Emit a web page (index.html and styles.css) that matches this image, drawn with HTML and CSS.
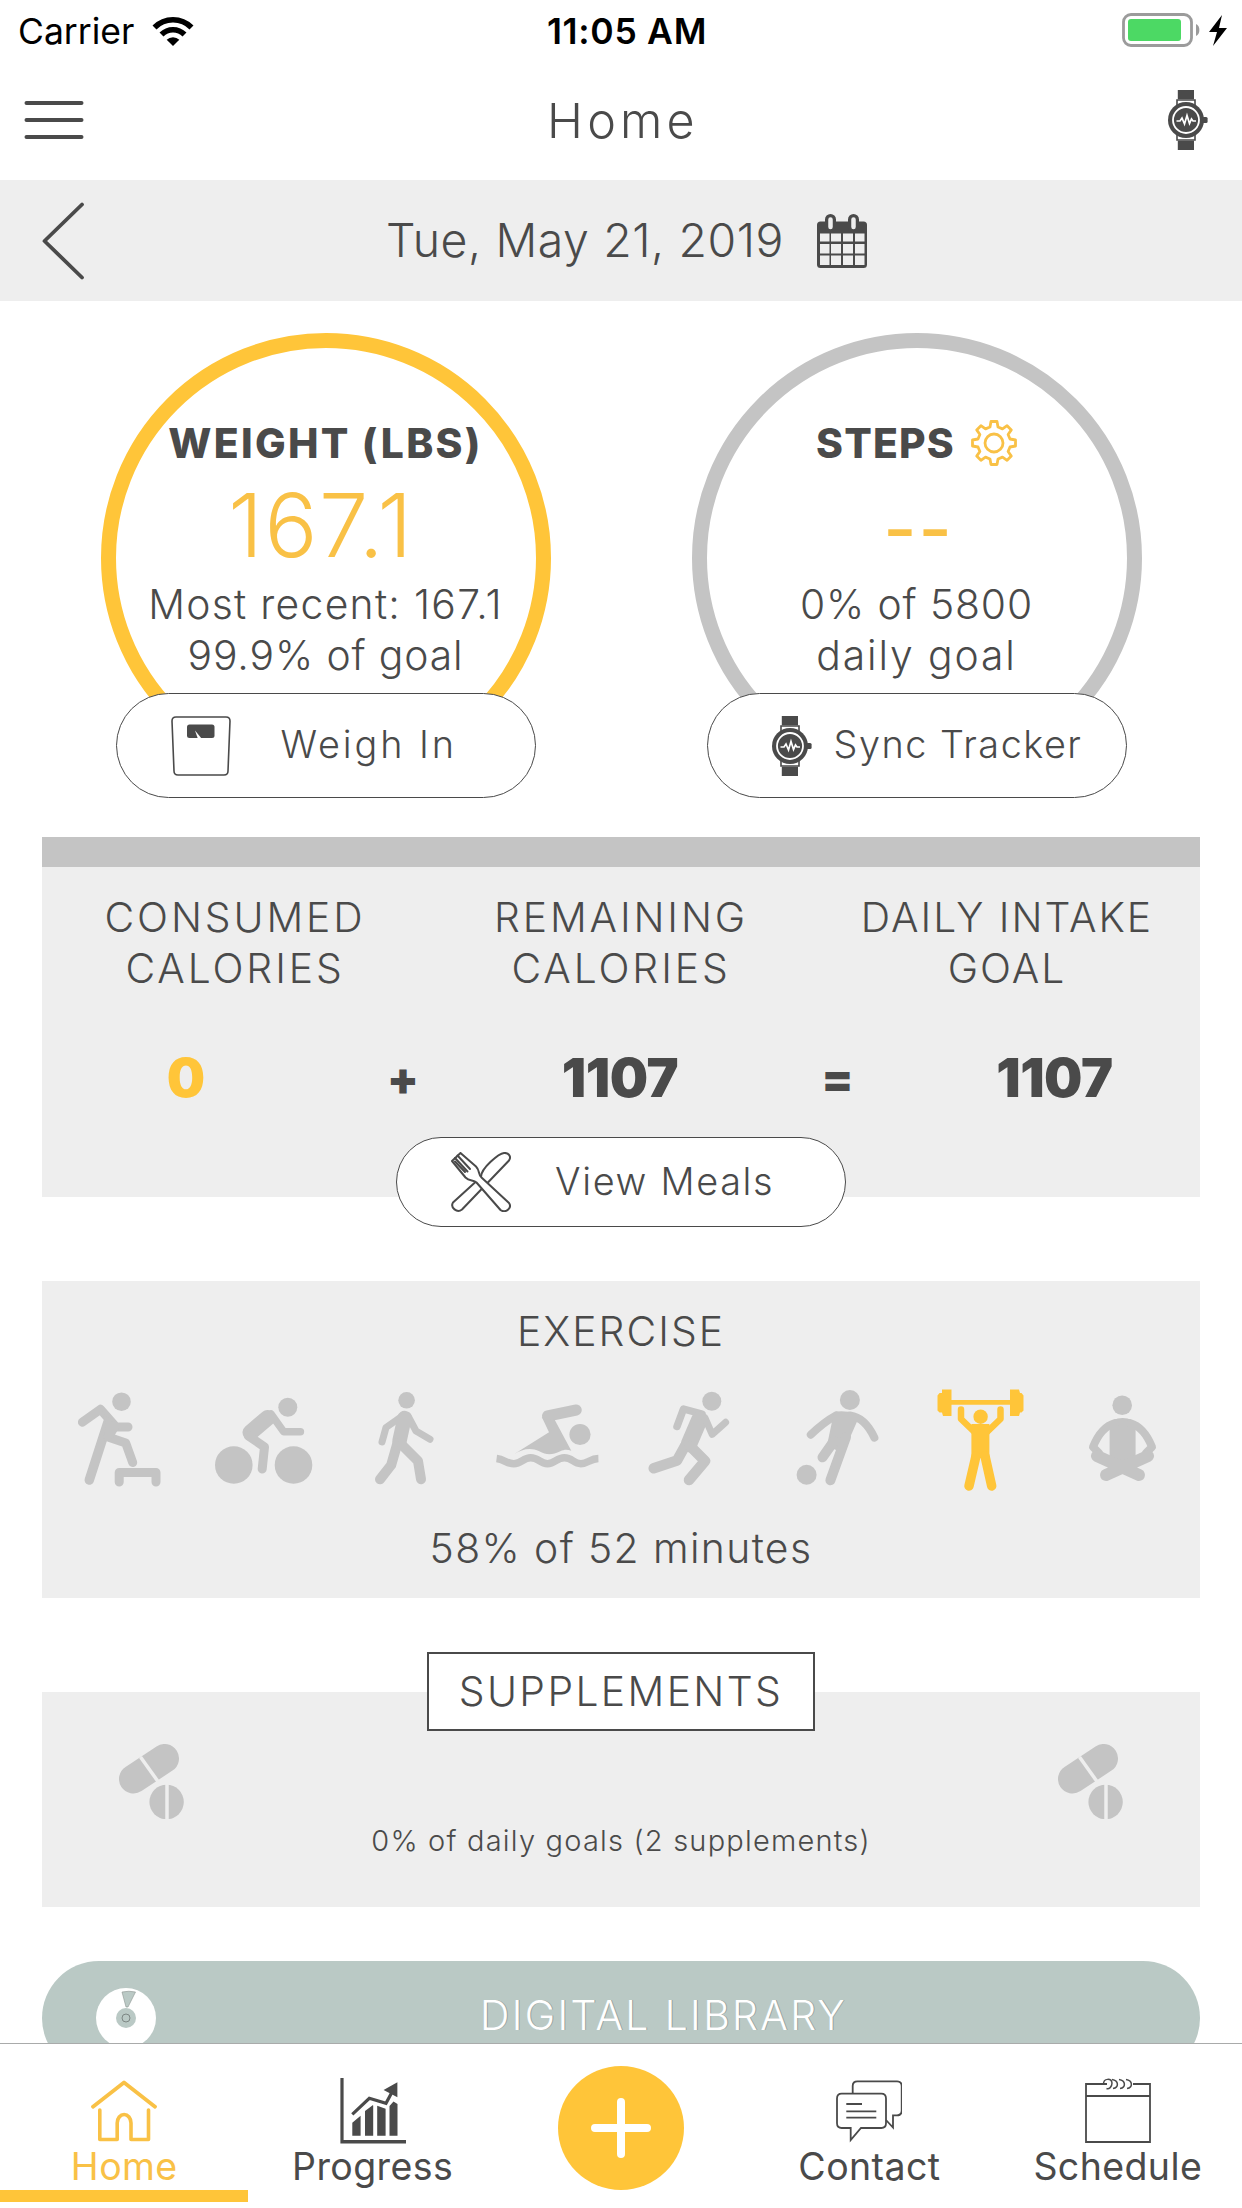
FILE: index.html
```html
<!DOCTYPE html>
<html lang="en">
<head>
    <meta charset="UTF-8">
    <meta name="viewport" content="width=device-width, initial-scale=1.0">
    <title>Home</title>
    <link rel="stylesheet" href="styles.css">
</head>
<body>
    <!-- shared symbols -->
    <svg class="symbols">
        <symbol id="watch" viewBox="0 0 40 60">
            <path d="M9.8 0h16.2v9.3H9.8zM9.8 50.7h16.2V60H9.8z"/>
            <path d="M9 18V10h18v8M9 42v8h18v-8" fill="none" stroke="#4a4a4a" stroke-width="1.6"/>
            <circle cx="18" cy="30" r="18"/>
            <rect x="34" y="27" width="5.6" height="6" rx="1.5"/>
            <circle cx="18" cy="30" r="13" fill="none" stroke="#fff" stroke-width="1.8"/>
            <path d="M8.5 31H12l2-3 2.5 6 2.5-8.5 2.5 8 2-4.5 1.5 2h3" fill="none" stroke="#fff" stroke-width="1.7"/>
        </symbol>
        <symbol id="pills" viewBox="0 0 65 75">
            <path d="M45.5 14.5L14.5 35" stroke="#c4c4c4" stroke-width="29" stroke-linecap="round"/>
            <path d="M21.5 13L39 37.5" stroke="#eee" stroke-width="3.5"/>
            <circle cx="47.6" cy="58" r="18.3" fill="#eee"/>
            <circle cx="47.6" cy="58" r="17.2" fill="#c4c4c4"/>
            <path d="M48 40v36" stroke="#eee" stroke-width="3.5"/>
        </symbol>
    </svg>

    <div class="status-bar">
        <div class="network">
            <span>Carrier</span>
            <svg viewBox="0 0 42 30" width="42" height="30">
                <path d="M2.500 11.500a26 26 0 0 1 37 0M9.500 18.500a16.300 16.300 0 0 1 23 0" fill="none" stroke="#000" stroke-width="5.600"/>
                <path d="M21 30l-6.300-6.300a9 9 0 0 1 12.600 0z"/>
            </svg>
        </div>
        <span class="time">11:05 AM</span>
        <svg class="battery" viewBox="0 0 106 34" width="106" height="34">
            <rect x="1.5" y="1.5" width="68" height="31" rx="7.5" fill="none" stroke="#9b9b9b" stroke-width="2.8"/>
            <rect x="6" y="6" width="53" height="22" rx="3" fill="#4cd964"/>
            <path d="M74 11c4.500 1.500 4.500 10.500 0 12z" fill="#9b9b9b"/>
            <path d="M100 2L87 19h8l-4 14 14-18h-8z"/>
        </svg>
    </div>

    <div class="nav-bar">
        <svg viewBox="0 0 60 40" width="60" height="40">
            <path d="M2.500 3h55M2.500 20h55M2.500 37h55" stroke="#4a4a4a" stroke-width="4" stroke-linecap="round"/>
        </svg>
        <h1 class="title">Home</h1>
        <svg width="40" height="60" fill="#4a4a4a"><use href="#watch"/></svg>
    </div>

    <div class="date-bar">
        <svg viewBox="0 0 43 78" width="43" height="78">
            <path d="M40 2.500L2.500 39 40 75.500" fill="none" stroke="#4a4a4a" stroke-width="3.800" stroke-linecap="round" stroke-linejoin="round"/>
        </svg>
        <div class="date">
            <span>Tue, May 21, 2019</span>
            <svg viewBox="0 0 50 54" width="50" height="54">
                <rect x="0" y="7.5" width="50" height="46.5" rx="3.5" fill="#4a4a4a"/>
                <path d="M13.500 14V5.500M36.500 14V5.500" stroke="#4a4a4a" stroke-width="11" stroke-linecap="round"/>
                <path d="M13.500 13V5.500M36.500 13V5.500" stroke="#eee" stroke-width="4.500" stroke-linecap="round"/>
                <path d="M3 19.500h9.500v8H3zM14 19.500h10v8H14zM26 19.500h10v8H26zM38 19.500h9.500v8H38zM3 30h9.500v9.500H3zM14 30h10v9.500H14zM26 30h10v9.500H26zM38 30h9.500v9.500H38zM3 41.500h9.500V51H3zM14 41.500h10V51H14zM26 41.500h10V51H26zM38 41.500h9.500V51H38z" fill="#eee"/>
            </svg>
        </div>
    </div>

    <div class="dials">
        <div class="dial-column">
            <div class="dial dial-active">
                <h2 class="dial-title weight-title">WEIGHT (LBS)</h2>
                <div class="dial-value">167.1</div>
                <div class="dial-text recent">Most recent: 167.1</div>
                <div class="dial-text">99.9% of goal</div>
            </div>
            <div class="button weigh-in">
                <svg viewBox="0 0 60 60" width="60" height="60">
                    <path d="M5 1h50q4 0 4 4l-2 50q0 4-4 4H7q-4 0-4-4L1 5q0-4 4-4z" fill="none" stroke="#4a4a4a" stroke-width="1.6"/>
                    <rect x="16" y="8.5" width="27.5" height="13.5" rx="2.5" fill="#4a4a4a"/>
                    <path d="M24 14.500l6.500 8-3.500.5z" fill="#fff"/>
                </svg>
                <span>Weigh In</span>
            </div>
        </div>
        <div class="dial-column">
            <div class="dial">
                <h2 class="dial-title">STEPS
                    <svg viewBox="-23 -23 46 46" width="46" height="46" fill="none" stroke="#f9c146" stroke-width="2.8" stroke-linejoin="round">
                        <path d="M-4-16L-3-21.500 3-21.500 4-16 8.500-14.100 13.100-17.300 17.300-13.100 14.100-8.500 16-4 21.500-3 21.500 3 16 4 14.100 8.500 17.300 13.100 13.100 17.300 8.500 14.100 4 16 3 21.500-3 21.500-4 16-8.500 14.100-13.100 17.300-17.300 13.100-14.100 8.500-16 4-21.500 3-21.500-3-16-4-14.100-8.500-17.300-13.100-13.100-17.300-8.500-14.100z"/>
                        <circle r="9"/>
                    </svg>
                </h2>
                <div class="dial-value dashes">--</div>
                <div class="dial-text steps-goal">0% of 5800</div>
                <div class="dial-text daily-goal">daily goal</div>
            </div>
            <div class="button sync">
                <svg width="40" height="60" fill="#4a4a4a"><use href="#watch"/></svg>
                <span>Sync Tracker</span>
            </div>
        </div>
    </div>

    <div class="card calories">
        <div class="labels">
            <div>CONSUMED<br>CALORIES</div>
            <div>REMAINING<br>CALORIES</div>
            <div class="intake">DAILY INTAKE<br>GOAL</div>
        </div>
        <div class="values">
            <span class="consumed">0</span>
            <span class="sign">+</span>
            <span>1107</span>
            <span class="sign">=</span>
            <span>1107</span>
        </div>
    </div>
    <div class="button meals">
        <svg viewBox="0 0 60 60" width="60" height="60" fill="#fff" stroke="#4a4a4a" stroke-width="2" stroke-linejoin="round" stroke-linecap="round">
            <path d="M30 25C30 16 48 1.500 53 1c5-.5 7.500 4 5 7.500L11 57.500c-5 4-12-2-9-7z"/>
            <path d="M1 9L9.500 1 25 14.500c4 4 2 8 5.500 11L58 51c3.500 5-3.500 10.500-8.500 7L25.500 30.500c-3-3-7-1-11-5z"/>
            <path d="M4 6l12.500 13.500M6.500 3.500L19 17M4 9.500L14 20" fill="none"/>
        </svg>
        <span>View Meals</span>
    </div>

    <div class="card exercise">
        <h2 class="card-title">EXERCISE</h2>
        <div class="activities">
            <svg viewBox="0 0 144 120">
                <circle cx="79.5" cy="21.7" r="9.3"/>
                <path d="M40.400 42.200L58.400 29.300 74 47H86" fill="none" stroke-width="9"/>
                <path d="M47.300 100L66 42" stroke-width="9.500"/>
                <path d="M66 57l17.700 6 7 19.500" fill="none" stroke-width="9"/>
                <path d="M58.500 30L77 48l-6 10-9 4 2-22z" stroke="none"/>
                <path d="M77.200 102V92.500H114V102" fill="none" stroke-width="9"/>
            </svg>
            <svg viewBox="0 0 144 120">
                <circle cx="46.8" cy="85" r="18.8"/>
                <circle cx="106.5" cy="85" r="18.8"/>
                <circle cx="100.8" cy="27.3" r="9.5"/>
                <path d="M84 34l12.600 17.700h16.800" fill="none" stroke-width="7.500"/>
                <path d="M80.500 38L63.500 52.500" stroke-width="16"/>
                <path d="M61.500 56L77.500 67l-2.300 22" fill="none" stroke-width="9"/>
            </svg>
            <svg viewBox="0 0 144 120">
                <circle cx="74.6" cy="20.3" r="8.3"/>
                <path d="M71 35.500L54 47.500l-4 14.500" fill="none" stroke-width="7"/>
                <path d="M76 36l8 15 14 8.300" fill="none" stroke-width="7"/>
                <path d="M72.500 38l-5 23" stroke-width="14.500"/>
                <path d="M65.500 63l-6.300 22L48 99.300" fill="none" stroke-width="10"/>
                <path d="M70 65l16 16 3 18.300" fill="none" stroke-width="10"/>
            </svg>
            <svg viewBox="0 0 144 120">
                <circle cx="104" cy="54.5" r="10.6"/>
                <path d="M100.300 30L71.500 36" stroke-width="11"/>
                <path d="M65.800 37L78.800 40 95.300 70.700c-4-1.500-7-1.500-11 .5-8 4-14 4-21 0-9-4-17-2-25.400 3.100L73 52.300z" stroke="none"/>
                <path d="M20.600 78.500c8 1 10 5.200 17.300 5.200 8 0 9-6 16.800-6 8 0 9 6 16.800 6s9-6 16.900-6 9 6 16.400 6 9-5 17.600-5.200" fill="none" stroke-width="7.500" stroke-linecap="butt"/>
            </svg>
            <svg viewBox="0 0 144 120">
                <circle cx="90.8" cy="21.3" r="9.5"/>
                <path d="M56 46.500l6.500-17.500L81 34" fill="none" stroke-width="7.500"/>
                <path d="M78.500 39.500L68 64" stroke-width="16.500"/>
                <path d="M84 38l7.200 16.300 13.400-12" fill="none" stroke-width="7"/>
                <path d="M64 66l-8 14.500-23.300 7.800" fill="none" stroke-width="10.500"/>
                <path d="M69 66l15 15-16 19" fill="none" stroke-width="10.500"/>
            </svg>
            <svg viewBox="0 0 144 120">
                <circle cx="83.9" cy="20" r="10"/>
                <path d="M70 35.500Q58 42 44.800 54.700M84 35.500q15 2 24.400 22.200" fill="none" stroke-width="8"/>
                <path d="M68 32q10-2 21 1.500l2 8-14 32-16-8z" stroke="none"/>
                <path d="M68 61l-11.500 16.300" stroke-width="10"/>
                <path d="M80 57l-15.600 43.300" stroke-width="10"/>
                <circle cx="40.6" cy="94.7" r="10"/>
            </svg>
            <svg class="current" viewBox="0 0 144 120">
                <path d="M40 20h60v4.700H40z" stroke="none"/>
                <path d="M31 9.500h9.500v26.500H32l-1-3.500h-2.500l-2-2v-15l2-2.500H31zM99 9.500h9l1 3.500h1.500l2 2.500v15l-2 2h-1.500l-1 3.500h-9z" stroke="none"/>
                <circle cx="69.6" cy="36.7" r="7.2"/>
                <path d="M50 29.500v9.500l14.500 14M89.500 29.500v9.500L75 53" fill="none" stroke-width="6.500"/>
                <path d="M60.400 44h18v34h-18z" stroke="none"/>
                <path d="M65 76l-7 30M74 76l6.700 30" stroke-width="9.500"/>
            </svg>
            <svg viewBox="0 0 144 120">
                <circle cx="67.2" cy="25.3" r="9.8"/>
                <path d="M54.600 46q2-8 13-8t13 8v42h-26z" stroke="none"/>
                <path d="M60 43Q46 47 38 67l6 6M75 43q14 4 22 24l-6 6" fill="none" stroke-width="8"/>
                <path d="M42 76l42 19M93 76L51 95" stroke-width="12"/>
            </svg>
        </div>
        <div class="minutes">58% of 52 minutes</div>
    </div>

    <div class="card supplements">
        <h2 class="boxed-title">SUPPLEMENTS</h2>
        <div class="pills">
            <svg width="65" height="75"><use href="#pills"/></svg>
            <svg width="65" height="75"><use href="#pills"/></svg>
        </div>
        <div class="supplements-goal">0% of daily goals (2 supplements)</div>
    </div>

    <div class="library">
        <svg viewBox="0 0 60 60" width="60" height="60">
            <circle cx="30" cy="30" r="30" fill="#fff"/>
            <path d="M26 4q7-1.500 13.500 0L32 19h-2z" fill="#bac9c5" stroke="#8b9491" stroke-width=".6"/>
            <circle cx="30" cy="30" r="10" fill="#bac9c5"/>
            <circle cx="30" cy="30" r="4" fill="none" stroke="#7d8784" stroke-width="1"/>
        </svg>
        <span>DIGITAL LIBRARY</span>
    </div>

    <div class="tab-bar">
        <div class="tab selected">
            <svg viewBox="0 0 66 66" width="66" height="66" fill="none" stroke="#f9c146" stroke-linecap="round" stroke-linejoin="round">
                <path d="M2 28.700l31-24.200 31 24.200" stroke-width="3.800"/>
                <path d="M8.800 32v29.500h17.400V45a6.900 8.500 0 0 1 13.800 0v16.500h17.500V32" stroke-width="3.600"/>
            </svg>
            <span>Home</span>
        </div>
        <div class="tab">
            <svg viewBox="0 0 66 66" width="66" height="66" fill="#4a4a4a">
                <path d="M.4 0h3.200v62H66v3.600H.4z"/>
                <path d="M12.300 44.700l8.300-7v20h-8.300zM25 33l8-6 .2.700v30H25zM37.200 27.700l8.400 3v27h-8.400zM49.500 28l4-4.500 4 2.500v31.700h-8z"/>
                <path d="M12.300 36.300l17-16L46 25.300l7-13" fill="none" stroke="#4a4a4a" stroke-width="3.200"/>
                <path d="M57.400 4.300v15L43.600 12z"/>
            </svg>
            <span>Progress</span>
        </div>
        <div class="tab">
            <div class="add">
                <svg viewBox="0 0 60 60" width="60" height="60">
                    <path d="M30 4v52M4 30h52" stroke="#fff" stroke-width="8" stroke-linecap="round"/>
                </svg>
            </div>
        </div>
        <div class="tab">
            <svg viewBox="0 0 66 66" width="66" height="66" fill="none" stroke="#4a4a4a" stroke-width="1.8">
                <path d="M16.700 15.700V8q0-4.700 4.700-4.700H61q4.700 0 4.700 4.700v24.600q0 4.700-4.700 4.700h-4v12.200L50 42"/>
                <path d="M5.700 15.700h39.600q4.700 0 4.700 4.700v24.900q0 4.700-4.700 4.700H25L14.700 62V50h-9Q1 50 1 45.300V20.400q0-4.700 4.700-4.700zM10.300 26H26M10.300 33.300h30M10.300 39.700h30"/>
            </svg>
            <span>Contact</span>
        </div>
        <div class="tab">
            <svg viewBox="0 0 66 66" width="66" height="66" fill="none" stroke="#4a4a4a" stroke-width="1.8">
                <path d="M22 6H1v58h64V6H48M1 18h64"/>
                <path d="M18.500 6c0-6 8-6 8.500-1 0 4-3 6.500-5.500 5.500M27 1.500c7 1 7 8 1 9M34 1.500c7 1 7 8 1 9M41 1.500c7 1 7 8 1 9" stroke-width="1.5"/>
            </svg>
            <span>Schedule</span>
        </div>
    </div>
</body>
</html>
```
FILE: styles.css
```css
* {
    box-sizing: border-box;
}
body {
    margin: 0;
    height: 2208px;
    overflow: hidden;
    background-color: #fff;
    color: #4a4a4a;
    font-family: Inter, "Open Sans", sans-serif;
    font-weight: 300;
    font-size: 40.8px;
    line-height: 51px;
}
h1, h2 {
    margin: 0;
    font-size: inherit;
    font-weight: inherit;
}
svg {
    display: block;
    flex-shrink: 0;
}
.symbols {
    position: absolute;
    width: 0;
    height: 0;
}

/* status bar */
.status-bar {
    display: grid;
    grid-template-columns: 1fr auto 1fr;
    align-items: center;
    height: 60px;
    padding: 2px 14px 0 18px;
    color: #000;
    font-size: 35.5px;
    font-weight: 400;
    white-space: nowrap;
}
.network {
    display: flex;
    align-items: center;
    gap: 18px;
}
.time {
    padding-left: 8px;
    font-weight: 600;
    letter-spacing: 0.7px;
}
.battery {
    justify-self: end;
    margin-top: -2px;
}

/* header */
.nav-bar {
    display: flex;
    align-items: center;
    justify-content: space-between;
    height: 120px;
    padding: 0 34px 0 24px;
}
.title {
    margin-left: -6px;
    font-size: 48.5px;
    letter-spacing: 4.2px;
}
.date-bar {
    display: flex;
    align-items: center;
    height: 121px;
    margin-bottom: -1px;
    padding-left: 42px;
    background-color: #eee;
}
.date {
    display: flex;
    align-items: center;
    gap: 33px;
    margin-left: 301px;
    font-size: 46.4px;
    letter-spacing: 0.6px;
}

/* weight and steps */
.dials {
    display: grid;
    grid-template-columns: 1fr 1fr;
    padding: 33px 30px 0;
}
.dial-column {
    display: flex;
    flex-direction: column;
    align-items: center;
}
.dial {
    width: 450px;
    height: 450px;
    padding-top: 70px;
    border: 15px solid #c4c4c4;
    border-radius: 50%;
    text-align: center;
    white-space: nowrap;
}
.dial-active {
    border-color: #ffc539;
}
.dial-title {
    display: flex;
    align-items: center;
    justify-content: center;
    gap: 16px;
    height: 50px;
    font-weight: 800;
    letter-spacing: 1.2px;
}
.weight-title {
    letter-spacing: 2.3px;
}
.dial-value {
    height: 111px;
    padding-right: 9px;
    color: #f9c146;
    font-size: 88px;
    font-weight: 350;
    line-height: 114px;
    letter-spacing: 1.6px;
}
.dashes {
    padding: 4px 0 0 4px;
    font-size: 72px;
    font-weight: 500;
    letter-spacing: 2px;
}
.dial-text {
    letter-spacing: 0.9px;
}
.recent {
    letter-spacing: 1.3px;
}
.daily-goal {
    letter-spacing: 1.9px;
}
.button {
    display: flex;
    align-items: center;
    position: relative;
    border: 1px solid #4a4a4a;
    border-radius: 53px;
    background-color: #fff;
    font-size: 37.8px;
    white-space: nowrap;
}
.button span {
    padding-bottom: 2px;
}
.weigh-in, .sync {
    width: 420px;
    height: 105px;
    margin-top: -90px;
}
.weigh-in {
    gap: 50px;
    padding-left: 54px;
    letter-spacing: 2.9px;
}
.sync {
    gap: 22px;
    padding-left: 64px;
    letter-spacing: 1.5px;
}

/* cards */
.card {
    margin: 0 42px;
    background-color: #eee;
    text-align: center;
}
.calories {
    height: 360px;
    margin-top: 39px;
    padding-top: 25px;
    border-top: 30px solid #c4c4c4;
}
.labels {
    display: grid;
    grid-template-columns: repeat(3, 1fr);
    letter-spacing: 2.9px;
}
.intake {
    letter-spacing: 2px;
}
.values {
    display: grid;
    grid-template-columns: repeat(5, 1fr);
    margin-top: 42px;
    padding: 0 37px 0 35px;
    font-size: 54px;
    font-weight: 900;
    line-height: 84px;
    letter-spacing: -0.5px;
}
.consumed {
    color: #ffc539;
}
.sign {
    font-size: 46px;
}
.meals {
    width: 450px;
    height: 90px;
    margin: -60px auto 0;
    padding-left: 54px;
    gap: 44px;
    letter-spacing: 1.7px;
}
.exercise {
    height: 317px;
    margin-top: 54px;
    padding-top: 25px;
}
.card-title {
    letter-spacing: 2px;
}
.activities {
    display: grid;
    grid-template-columns: repeat(8, 1fr);
    margin-top: 23px;
}
.activities svg {
    width: 144px;
    height: 120px;
    fill: #c4c4c4;
    stroke: #c4c4c4;
    stroke-width: 0;
    stroke-linecap: round;
    stroke-linejoin: round;
}
.activities .current {
    fill: #ffc539;
    stroke: #ffc539;
}
.minutes {
    margin-top: 23px;
    letter-spacing: 1.4px;
}
.supplements {
    display: flex;
    flex-direction: column;
    align-items: center;
    height: 215px;
    margin-top: 94px;
}
.boxed-title {
    width: 388px;
    height: 79px;
    margin-top: -40px;
    border: 2px solid #4a4a4a;
    background-color: #fff;
    line-height: 75px;
    letter-spacing: 2.4px;
}
.pills {
    display: flex;
    justify-content: space-between;
    align-self: stretch;
    margin-top: 13px;
    padding: 0 77px;
}
.supplements-goal {
    font-size: 29px;
    line-height: 43px;
    letter-spacing: 1.2px;
}
.library {
    display: flex;
    align-items: center;
    height: 114px;
    margin: 54px 42px 0;
    padding: 0 29px 0 54px;
    border-radius: 57px;
    background-color: #bac9c5;
    color: #fff;
    letter-spacing: 2.4px;
}
.library span {
    flex: 1;
    padding-bottom: 5px;
    text-align: center;
    text-shadow: 1px 0 0 #95a19e;
}

/* tab bar */
.tab-bar {
    position: fixed;
    left: 0;
    right: 0;
    bottom: 0;
    display: grid;
    grid-template-columns: repeat(5, 1fr);
    height: 165px;
    border-top: 1px solid #a9abab;
    background-color: #fff;
    font-size: 37.5px;
    font-weight: 400;
    line-height: 46px;
}
.tab {
    display: flex;
    flex-direction: column;
    align-items: center;
    height: 158px;
    padding-top: 34px;
    border-bottom: 12px solid transparent;
    letter-spacing: 0.4px;
}
.selected {
    border-bottom-color: #ffc539;
    color: #f9c146;
}
.add {
    display: flex;
    align-items: center;
    justify-content: center;
    width: 126px;
    height: 126px;
    margin-top: -12px;
    border-radius: 50%;
    background-color: #ffc539;
}
```
